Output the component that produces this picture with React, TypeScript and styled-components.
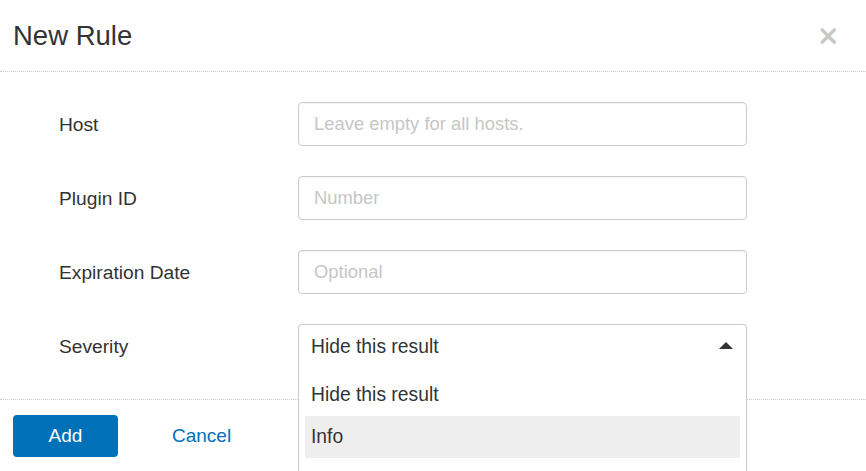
import * as React from "react";
import styled, { createGlobalStyle } from "styled-components";

const GlobalStyle = createGlobalStyle`
    html, body {
        margin: 0;
        padding: 0;
        background: #fff;
    }
    body {
        font-family: "Liberation Sans", Arial, sans-serif;
        color: #333;
    }
`;

// only the options that show in the open list
const severities = ["Hide this result", "Info"];

interface Field {
    label: string;
    placeholder: string;
}

const fields: Field[] = [
    { label: "Host", placeholder: "Leave empty for all hosts." },
    { label: "Plugin ID", placeholder: "Number" },
    { label: "Expiration Date", placeholder: "Optional" },
];

const App: React.FC = () => {
    const [severity, setSeverity] = React.useState(severities[0]);
    const [hovered, setHovered] = React.useState(1);
    return (
        <>
            <GlobalStyle />
            <Modal>
                <Header>
                    <Title>New Rule</Title>
                    <Close aria-label="Close">×</Close>
                </Header>
                <Body>
                    {fields.map((f) => (
                        <Row key={f.label}>
                            <Label>{f.label}</Label>
                            <Input type="text" placeholder={f.placeholder} />
                        </Row>
                    ))}
                    <Row>
                        <Label>Severity</Label>
                        <SelectWrap>
                            <SelectBox open>
                                <span>{severity}</span>
                                <Caret />
                            </SelectBox>
                            <Menu>
                                {severities.map((s, i) => (
                                    <Option
                                        key={s}
                                        active={i === hovered}
                                        onMouseEnter={() => setHovered(i)}
                                        onClick={() => setSeverity(s)}
                                    >
                                        {s}
                                    </Option>
                                ))}
                            </Menu>
                        </SelectWrap>
                    </Row>
                </Body>
                <Footer>
                    <PrimaryButton>Add</PrimaryButton>
                    <LinkButton>Cancel</LinkButton>
                </Footer>
            </Modal>
        </>
    );
};

const Modal = styled.div`
    width: 866px;
    height: 471px;
    overflow: hidden;
    background: #fff;
`;

const Header = styled.div`
    display: flex;
    align-items: center;
    justify-content: space-between;
    height: 71px;
    padding: 0 26px 0 13px;
    border-bottom: 1px dotted #ccc;
`;

const Title = styled.h4`
    margin: 0;
    font-size: 27.5px;
    font-weight: 400;
    color: #333;
`;

const Close = styled.button`
    border: 0;
    background: transparent;
    padding: 0;
    font-family: "DejaVu Sans", sans-serif;
    font-size: 28px;
    font-weight: 700;
    line-height: 1;
    color: #c8c8c8;
    cursor: pointer;
`;

const Body = styled.div`
    display: flex;
    flex-direction: column;
    gap: 30px;
    padding: 30px 0 31px 59px;
`;

const Row = styled.div`
    display: grid;
    grid-template-columns: 239px 449px;
    align-items: center;
    height: 44px;
`;

const Label = styled.label`
    font-size: 19.2px;
    line-height: 1;
    padding-top: 2px;
    color: #333;
`;

const Input = styled.input`
    box-sizing: border-box;
    width: 100%;
    height: 44px;
    padding: 0 15px;
    border: 1px solid #ccc;
    border-radius: 4px;
    box-shadow: inset 0 1px 1px rgba(0, 0, 0, 0.04);
    font-family: "Liberation Sans", Arial, sans-serif;
    font-size: 18.4px;
    color: #333;
    outline: 0;
    &::placeholder {
        color: #c6c6c6;
    }
`;

const SelectWrap = styled.div`
    position: relative;
    height: 44px;
`;

const SelectBox = styled.div<{ open?: boolean }>`
    box-sizing: border-box;
    display: flex;
    align-items: center;
    justify-content: space-between;
    height: 44px;
    padding: 0 13px 0 12px;
    border: 1px solid #ccc;
    border-bottom: ${(p) => (p.open ? "0" : "1px solid #ccc")};
    border-radius: ${(p) => (p.open ? "4px 4px 0 0" : "4px")};
    background: #fff;
    font-size: 19.3px;
    color: #333;
    cursor: pointer;
`;

const Caret = styled.span`
    width: 0;
    height: 0;
    border-left: 7px solid transparent;
    border-right: 7px solid transparent;
    border-bottom: 7px solid #333;
    margin-top: -2px;
`;

const Menu = styled.ul`
    position: absolute;
    z-index: 10;
    top: 44px;
    left: 0;
    right: 0;
    height: 110px;
    margin: 0;
    padding: 6px 6px 0;
    list-style: none;
    background: #fff;
    border: 1px solid #ccc;
    border-top: 0;
`;

const Option = styled.li<{ active?: boolean }>`
    display: flex;
    align-items: center;
    height: 42px;
    padding: 0 6px;
    font-size: 19.3px;
    color: #333;
    background: ${(p) => (p.active ? "#eee" : "transparent")};
    cursor: pointer;
`;

const Footer = styled.div`
    display: flex;
    align-items: center;
    gap: 54px;
    padding: 15px 13px;
    border-top: 1px dotted #ccc;
`;

const PrimaryButton = styled.button`
    width: 105px;
    height: 42px;
    border: 0;
    border-radius: 4px;
    background: #0070b9;
    color: #fff;
    font-family: "Liberation Sans", Arial, sans-serif;
    font-size: 19px;
    cursor: pointer;
`;

const LinkButton = styled.button`
    border: 0;
    background: transparent;
    padding: 0;
    color: #0070b9;
    font-family: "Liberation Sans", Arial, sans-serif;
    font-size: 19px;
    cursor: pointer;
`;

export default App;
